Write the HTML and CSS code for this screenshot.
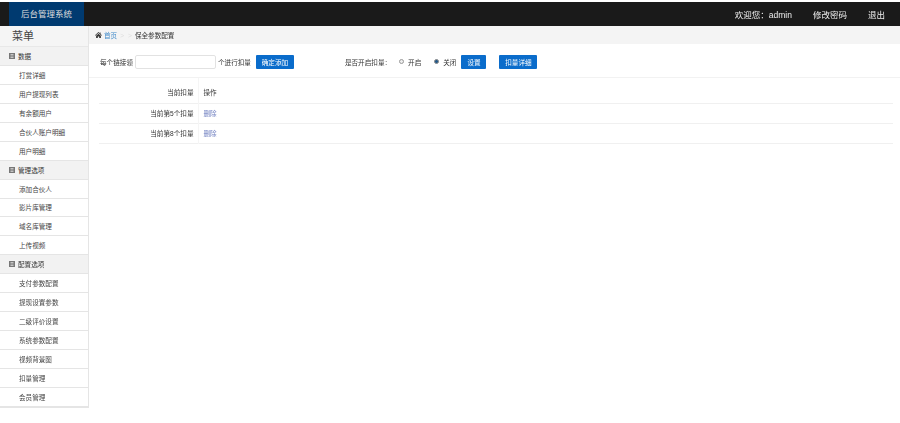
FILE: index.html
```html
<!DOCTYPE html>
<html lang="zh">
<head>
<meta charset="utf-8">
<title>后台管理系统</title>
<link rel="stylesheet" href="styles.css">
</head>
<body>
<header class="navbar">
  <div class="brand">后台管理系统</div>
  <nav class="user-nav">
    <span>欢迎您：admin</span>
    <a>修改密码</a>
    <a>退出</a>
  </nav>
</header>
<div class="layout">
  <aside class="sidebar">
    <div class="menu-title">菜单</div>
    <div class="group"><svg class="gicon" viewBox="0 0 8 8"><path d="M0 0h8v8H0z" fill="#777"/><path d="M2 2h4M2 4h4M2 6h4" stroke="#ddd" stroke-width="1"/></svg>数据</div>
    <a class="item">打赏详细</a>
    <a class="item">用户提现列表</a>
    <a class="item">有余额用户</a>
    <a class="item">合伙人账户明细</a>
    <a class="item">用户明细</a>
    <div class="group"><svg class="gicon" viewBox="0 0 8 8"><path d="M0 0h8v8H0z" fill="#777"/><path d="M2 2h4M2 4h4M2 6h4" stroke="#ddd" stroke-width="1"/></svg>管理选项</div>
    <a class="item">添加合伙人</a>
    <a class="item">影片库管理</a>
    <a class="item">域名库管理</a>
    <a class="item">上传视频</a>
    <div class="group"><svg class="gicon" viewBox="0 0 8 8"><path d="M0 0h8v8H0z" fill="#777"/><path d="M2 2h4M2 4h4M2 6h4" stroke="#ddd" stroke-width="1"/></svg>配置选项</div>
    <a class="item">支付参数配置</a>
    <a class="item">提现设置参数</a>
    <a class="item">二级评价设置</a>
    <a class="item">系统参数配置</a>
    <a class="item">视频背景图</a>
    <a class="item">扣量管理</a>
    <a class="item">会员管理</a>
  </aside>
  <main class="content">
    <div class="crumbs">
      <svg class="home" viewBox="0 0 10 9"><path d="M5 0 0 4.4l.6.7L5 1.3l4.4 3.8.6-.7L8 2.6V.6H6.8v1L5 0z" fill="#333"/><path d="M1.6 5.2 5 2.3l3.4 2.9V9H6V6.4H4V9H1.6z" fill="#333"/></svg>
      <a class="crumb-link">首页</a>
      <span class="sep">&gt;</span>
      <span class="sep sep2">&gt;</span>
      <span>保全参数配置</span>
    </div>
    <div class="form-row">
      <span>每个链接领</span>
      <input class="num" type="text">
      <span class="after-input">个进行扣量</span>
      <button class="btn btn-add">确定添加</button>
      <span class="q">是否开启扣量：</span>
      <label class="radio r1"><input type="radio" name="k">开启</label>
      <label class="radio r2"><input type="radio" name="k" checked>关闭</label>
      <button class="btn btn-set">设置</button>
      <button class="btn btn-detail">扣量详细</button>
    </div>
    <table class="grid">
      <tr class="r-head"><td class="c1">当前扣量</td><td class="c2">操作</td></tr>
      <tr><td class="c1">当前第5个扣量</td><td class="c2"><a class="del">删除</a></td></tr>
      <tr><td class="c1">当前第8个扣量</td><td class="c2"><a class="del">删除</a></td></tr>
    </table>
  </main>
</div>
</body>
</html>
```

FILE: styles.css
```css
* { box-sizing: border-box; }
html, body { margin: 0; padding: 0; }
body {
  width: 900px;
  height: 423px;
  overflow: hidden;
  background: #fff;
  color: #333;
  font-family: "Liberation Sans", "Noto Sans CJK SC", sans-serif;
  font-size: 6.6px;
  padding-top: 2px;
}
.navbar {
  height: 24px;
  background: #1a1a1a;
  display: flex;
  justify-content: space-between;
  align-items: center;
  padding-left: 9px;
  color: #eee;
}
.user-nav, .layout { filter: blur(0.3px); }
.brand {
  width: 75px;
  height: 24px;
  line-height: 24px;
  background: #003a70;
  color: #ddd;
  font-size: 8.5px;
  text-align: center;
}
.user-nav {
  display: flex;
  gap: 21px;
  font-size: 8.5px;
  padding-right: 15px;
}
.layout { display: flex; align-items: flex-start; }
.sidebar {
  width: 89px;
  flex: none;
  background: #fff;
  border-right: 1px solid #e5e5e5;
  border-bottom: 1px solid #e5e5e5;
}
.menu-title {
  height: 21px;
  line-height: 20px;
  background: #f5f5f5;
  padding-left: 12px;
  font-size: 11px;
  color: #444;
  border-bottom: 1px solid #e8e8e8;
}
.group {
  height: 18.94px;
  display: flex;
  align-items: center;
  gap: 3px;
  padding-left: 9px;
  background: #f2f2f2;
  border-bottom: 1px solid #e5e5e5;
}
.gicon { width: 6px; height: 6px; }
.item {
  display: flex;
  align-items: center;
  height: 18.94px;
  padding-left: 19px;
  border-bottom: 1px solid #e5e5e5;
  color: #444;
}
.content { flex: 1; min-width: 0; }
.crumbs {
  height: 18px;
  background: #f4f4f4;
  display: flex;
  align-items: center;
  padding-left: 6px;
}
.home { width: 7px; height: 6.5px; margin-right: 2px; }
.crumb-link { color: #428bca; }
.sep { color: #ddd; margin-left: 3px; }
.sep2 { margin-left: 4px; margin-right: 3px; }
.form-row {
  height: 34px;
  display: flex;
  align-items: center;
  padding-left: 11px;
  padding-top: 2px;
  border-bottom: 1px solid #f2f2f2;
}
.num {
  width: 81px;
  height: 14px;
  margin: 0 2px;
  padding: 0;
  border: 1px solid #e2e2e2;
  border-radius: 2px;
  background: #fff;
}
.btn {
  height: 14px;
  padding: 0;
  border: 0;
  border-radius: 1px;
  background: #0a6ccb;
  color: #fff;
  font: inherit;
  text-align: center;
}
.btn-add { width: 38px; margin-left: 5px; }
.q { margin-left: 51px; }
.radio { display: flex; align-items: center; }
.radio input {
  appearance: none;
  width: 5px;
  height: 5px;
  margin: 0 4px 0 0;
  border: 1px solid #999;
  border-radius: 50%;
  background: #eee;
}
.radio input:checked { background: #245a8a; border-color: #888; }
.r1 { margin-left: 8px; }
.r2 { margin-left: 13px; }
.btn-set { width: 25px; margin-left: 5px; }
.btn-detail { width: 38px; margin-left: 13px; }
.grid {
  margin-left: 10px;
  width: 794px;
  border-collapse: collapse;
  table-layout: fixed;
}
.grid tr { height: 20px; border-bottom: 1px solid #f0f0f0; }
.grid .r-head { height: 25px; }
.grid td { padding: 0; }
.grid .r-head td { padding-top: 3px; }
.c1 { width: 99px; text-align: right; padding-right: 4px !important; border-right: 1px solid #f5f5f5; }
.c2 { padding-left: 5px !important; }
.del { color: #6f7fc0; }
```
